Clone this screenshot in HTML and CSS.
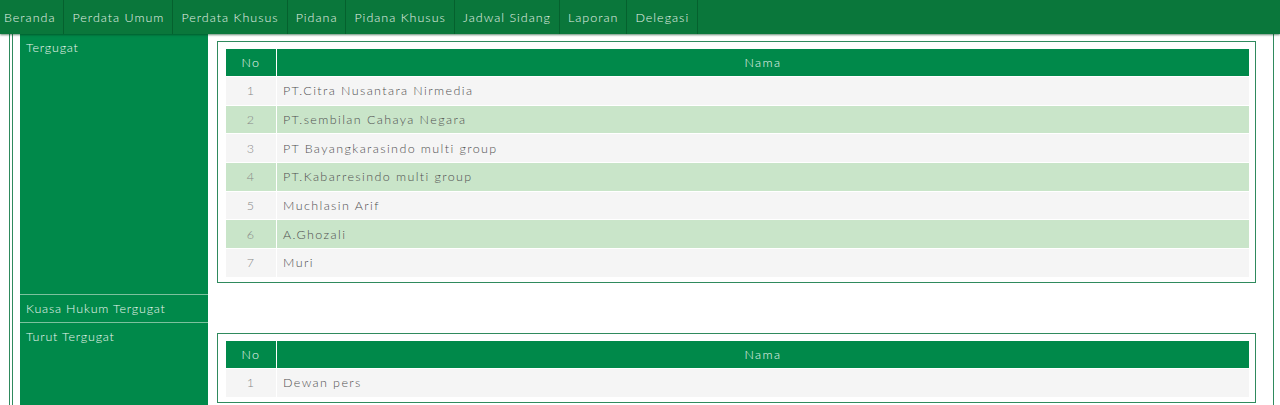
FILE: index.html
```html
<!DOCTYPE html>
<html lang="id">
<head>
  <meta charset="UTF-8" />
  <title>Detail Perkara</title>
  <link rel="stylesheet" href="styles.css">
</head>
<body>

  <nav class="topnav">
    <a href="#">Beranda</a>
    <a href="#">Perdata Umum</a>
    <a href="#">Perdata Khusus</a>
    <a href="#">Pidana</a>
    <a href="#">Pidana Khusus</a>
    <a href="#">Jadwal Sidang</a>
    <a href="#">Laporan</a>
    <a href="#">Delegasi</a>
  </nav>

  <div class="page">
    <div class="page-inner">
      <div class="detail">

        <div class="label">Tergugat</div>
        <div class="value">
          <div class="box">
            <table class="list">
              <thead>
                <tr><th class="col-no">No</th><th>Nama</th></tr>
              </thead>
              <tbody>
                <tr><td class="col-no">1</td><td>PT.Citra Nusantara Nirmedia</td></tr>
                <tr><td class="col-no">2</td><td>PT.sembilan Cahaya Negara</td></tr>
                <tr><td class="col-no">3</td><td>PT Bayangkarasindo multi group</td></tr>
                <tr><td class="col-no">4</td><td>PT.Kabarresindo multi group</td></tr>
                <tr><td class="col-no">5</td><td>Muchlasin Arif</td></tr>
                <tr><td class="col-no">6</td><td>A.Ghozali</td></tr>
                <tr><td class="col-no">7</td><td>Muri</td></tr>
              </tbody>
            </table>
          </div>
        </div>

        <div class="label">Kuasa Hukum Tergugat</div>
        <div class="value empty"></div>

        <div class="label">Turut Tergugat</div>
        <div class="value spaced">
          <div class="box">
            <table class="list">
              <thead>
                <tr><th class="col-no">No</th><th>Nama</th></tr>
              </thead>
              <tbody>
                <tr><td class="col-no">1</td><td>Dewan pers</td></tr>
              </tbody>
            </table>
          </div>
        </div>

      </div>
    </div>
  </div>

</body>
</html>
```

FILE: styles.css
```css
* {
  box-sizing: border-box;
  margin: 0;
  padding: 0;
}

body {
  font-family: Lato, 'DejaVu Sans', sans-serif;
  font-weight: 300;
  font-size: 12.5px;
  letter-spacing: 1.4px;
  background: #fff;
  color: #505050;
}

.topnav {
  display: flex;
  height: 34px;
  background: #0a773b;
  box-shadow: 0 1px 2px rgba(0, 60, 25, 0.6);
  position: relative;
  z-index: 2;
}

.topnav a {
  display: flex;
  align-items: center;
  padding: 0 8px;
  color: #e6f3e8;
  text-decoration: none;
  letter-spacing: 1px;
  border-right: 1px solid #05612e;
}

.topnav a:first-child {
  padding-left: 4px;
}

.page {
  margin: 0 6px 0 9px;
  border-left: 1px solid #2f8a5d;
  border-right: 1px solid #2f8a5d;
  padding-left: 2px;
}

.page-inner {
  border-left: 1px solid #2f8a5d;
  padding: 0 8px 0 7px;
}

.detail {
  display: grid;
  grid-template-columns: 188px 1fr;
}

.label {
  background: #00894a;
  color: #eef7f0;
  padding: 5px 6px;
  border-bottom: 1px solid #7cc19d;
  line-height: 17px;
  letter-spacing: 0.8px;
}

.value {
  padding: 7px 9px 12px 9px;
}

.value.empty {
  padding: 0;
}

.value.spaced {
  padding-top: 10px;
}

.box {
  border: 1px solid #2f8a5d;
  padding: 6px 5px 4px 7px;
}

.list {
  width: 100%;
  border-collapse: collapse;
}

.list th,
.list td {
  border: 1px solid #fff;
  padding: 0 6px;
  text-align: left;
}

.list th {
  background: #00894a;
  color: #eef7f0;
  font-weight: 300;
  height: 28px;
  text-align: center;
}

.list td {
  height: 28.7px;
  background: #f5f5f5;
}

.list tbody tr:nth-child(even) td {
  background: #c9e5c9;
}

.list .col-no {
  width: 51px;
  text-align: center;
  color: #888;
}

.list th.col-no {
  color: #eef7f0;
}
```
